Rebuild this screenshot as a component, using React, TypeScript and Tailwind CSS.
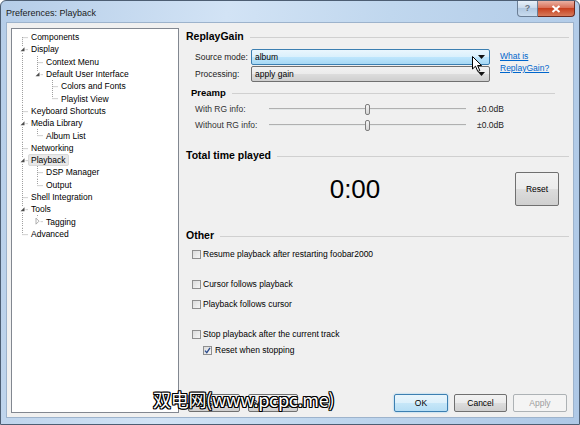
import React from 'react'

type TreeNode = { label: string; level: number; exp?: 'open' | 'closed'; sel?: boolean }

const tree: TreeNode[] = [
  { label: 'Components', level: 0 },
  { label: 'Display', level: 0, exp: 'open' },
  { label: 'Context Menu', level: 1 },
  { label: 'Default User Interface', level: 1, exp: 'open' },
  { label: 'Colors and Fonts', level: 2 },
  { label: 'Playlist View', level: 2 },
  { label: 'Keyboard Shortcuts', level: 0 },
  { label: 'Media Library', level: 0, exp: 'open' },
  { label: 'Album List', level: 1 },
  { label: 'Networking', level: 0 },
  { label: 'Playback', level: 0, exp: 'open', sel: true },
  { label: 'DSP Manager', level: 1 },
  { label: 'Output', level: 1 },
  { label: 'Shell Integration', level: 0 },
  { label: 'Tools', level: 0, exp: 'open' },
  { label: 'Tagging', level: 1, exp: 'closed' },
  { label: 'Advanced', level: 0 },
]

const ROW = 12.3

// does the node (or ancestor) at depth k have a later sibling?
const hasNext = (i: number, k: number) => {
  for (let j = i + 1; j < tree.length; j++) {
    if (tree[j].level <= k) return tree[j].level === k
  }
  return false
}

function TreeRow({ i }: { i: number }) {
  const n = tree[i]
  const w = 16 + 15 * n.level
  const mid = ROW / 2
  const x = 10.5 + 15 * n.level
  const line = { stroke: '#a0a0a0', strokeDasharray: '1 1', strokeWidth: 1 }

  return (
    <div className="flex h-[12.3px] items-center">
      <svg width={w} height={ROW} className="shrink-0">
        {Array.from({ length: n.level }).map((_, k) =>
          hasNext(i, k) ? <line key={k} x1={10.5 + 15 * k} y1={0} x2={10.5 + 15 * k} y2={ROW} {...line} /> : null
        )}
        <line x1={x} y1={i === 0 ? mid : 0} x2={x} y2={hasNext(i, n.level) ? ROW : mid} {...line} />
        <line x1={x} y1={mid + 0.5} x2={x + 7} y2={mid + 0.5} {...line} />
        {n.exp === 'open' && (
          <>
            <rect x={x - 3} y={mid - 3} width={6} height={6} fill="#fff" />
            <polygon points={`${x + 2},${mid - 2} ${x + 2},${mid + 2} ${x - 2},${mid + 2}`} fill="#4d4d4d" />
          </>
        )}
        {n.exp === 'closed' && (
          <>
            <rect x={x - 3} y={mid - 4} width={6} height={8} fill="#fff" />
            <polygon points={`${x - 1.5},${mid - 3} ${x + 1.5},${mid} ${x - 1.5},${mid + 3}`} fill="#fff" stroke="#9a9a9a" strokeWidth={0.8} />
          </>
        )}
      </svg>
      <span
        className={
          n.sel
            ? 'rounded-[2px] border border-[#d9d9d9] bg-[#e8e8e8] px-[2px] leading-[10px] whitespace-nowrap'
            : 'border border-transparent px-[2px] leading-[10px] whitespace-nowrap'
        }
      >
        {n.label}
      </span>
    </div>
  )
}

function Heading({ children, small, lineRight }: { children: React.ReactNode; small?: boolean; lineRight?: boolean }) {
  return (
    <div className="flex h-[14px] items-center">
      <span className={small ? 'text-[9.5px] font-bold' : 'text-[10.5px] font-bold'}>{children}</span>
      <div className={lineRight ? 'ml-[6px] mr-[14px] h-px flex-1 bg-[#d0d0d0]' : 'ml-[6px] h-px flex-1 bg-[#d0d0d0]'} />
    </div>
  )
}

function Arrow() {
  return (
    <svg width="7" height="4" className="shrink-0">
      <polygon points="0,0 7,0 3.5,4" fill="#111" />
    </svg>
  )
}

function Combo({ value, hot }: { value: string; hot?: boolean }) {
  return (
    <div
      className={
        hot
          ? 'flex h-[16px] w-[239px] items-center justify-between rounded-[2px] border border-[#3c7fb1] bg-[linear-gradient(#eaf6fd_0%,#d9f0fc_50%,#bee6fd_50%,#a7d9f5_100%)] pl-[3px] pr-[4px]'
          : 'flex h-[16px] w-[239px] items-center justify-between rounded-[2px] border border-[#707070] bg-[linear-gradient(#f2f2f2_0%,#ebebeb_50%,#dddddd_50%,#cfcfcf_100%)] pl-[3px] pr-[4px]'
      }
    >
      <span>{value}</span>
      <Arrow />
    </div>
  )
}

function Slider({ label }: { label: string }) {
  return (
    <div className="flex h-[16px] items-center pl-[9px]">
      <span className="w-[74px] text-[#333]">{label}</span>
      <div className="flex h-[12px] w-[197px] items-center justify-center">
        <div className="h-[2px] flex-1 border-t border-[#b0b0b0] bg-[#e7eaea]" />
        <div className="h-[11px] w-[5px] rounded-[2px] border border-[#7d7d7d] bg-[linear-gradient(#f4f4f4,#d6d6d6)]" />
        <div className="h-[2px] flex-1 border-t border-[#b0b0b0] bg-[#e7eaea]" />
      </div>
      <span className="ml-[11px] text-[#222]">±0.0dB</span>
    </div>
  )
}

function Check({ label, checked, indent }: { label: string; checked?: boolean; indent?: boolean }) {
  return (
    <div className={indent ? 'flex h-[13px] items-center pl-[17px]' : 'flex h-[13px] items-center pl-[6px]'}>
      <div className="flex h-[9px] w-[9px] items-center justify-center border border-[#8f8f8f] bg-[linear-gradient(135deg,#dcdcdc,#f6f6f6)]">
        {checked && (
          <svg width="7" height="7" viewBox="0 0 7 7">
            <path d="M1 3.6 L2.8 5.6 L6 0.8" fill="none" stroke="#2a4b8d" strokeWidth="1.3" />
          </svg>
        )}
      </div>
      <span className={indent ? 'ml-[3px]' : 'ml-[2px]'}>{label}</span>
    </div>
  )
}

const btn =
  'flex h-[18px] items-center justify-center rounded-[2px] border border-[#707070] bg-[linear-gradient(#f2f2f2_0%,#ebebeb_50%,#dddddd_50%,#cfcfcf_100%)]'

export default function App() {
  return (
    <div className="flex h-[425px] w-[580px] flex-col overflow-hidden rounded-t-[6px] border border-[#4d5e73] bg-[linear-gradient(100deg,#b5cde8_0%,#d2e3f5_35%,#c0d7ee_60%,#aec8e6_100%)] font-['Liberation_Sans',Arial,sans-serif] text-[8.5px] text-black">
      {/* title bar */}
      <div className="flex h-[21px] shrink-0 items-start">
        <span className="mt-[6px] ml-[5px] text-[9px] text-[#1b1b1b]">Preferences: Playback</span>
        <div className="ml-auto mr-[4px] flex">
          <div className="flex h-[16px] w-[21px] items-center justify-center rounded-bl-[4px] border border-t-0 border-[#6b7e95] bg-[linear-gradient(#e8f0f9,#c5d7ea_50%,#b1c8e1_50%,#c9dbee)] text-[9px] font-bold text-[#6a7480]">
            ?
          </div>
          <div className="flex h-[16px] w-[37px] items-center justify-center rounded-br-[4px] border border-l-0 border-t-0 border-[#6d2a1f] bg-[linear-gradient(#eab0a2,#d86a50_50%,#c7401f_50%,#d77a5a)]">
            <svg width="10" height="8" viewBox="0 0 10 8">
              <path d="M1.5 1 L8.5 7 M8.5 1 L1.5 7" stroke="#fff" strokeWidth="2" />
            </svg>
          </div>
        </div>
      </div>

      {/* client area */}
      <div className="relative mx-[5px] mb-[6px] flex flex-1 border border-[#9db3cc] bg-[#f0f0f0]">
        {/* tree */}
        <div className="mt-[5px] mb-[4px] ml-[4px] w-[168px] border border-[#828790] bg-white pt-[2px]">
          {tree.map((_, i) => (
            <TreeRow key={i} i={i} />
          ))}
        </div>

        {/* right page */}
        <div className="ml-[7px] flex flex-1 flex-col pt-[7px] pr-[4px] pb-[4px]">
          <Heading>ReplayGain</Heading>

          <div className="mt-[5px] flex">
            <div className="flex flex-col gap-[1px] pl-[9px]">
              <div className="flex items-center">
                <span className="w-[56px] text-[#222]">Source mode:</span>
                <Combo value="album" hot />
              </div>
              <div className="flex items-center">
                <span className="w-[56px] text-[#222]">Processing:</span>
                <Combo value="apply gain" />
              </div>
            </div>
            <div className="mt-[1px] ml-[10px] leading-[12px] text-[#0066cc] underline">
              What is
              <br />
              ReplayGain?
            </div>
          </div>

          <div className="mt-[4px] pl-[5px]">
            <Heading small lineRight>
              Preamp
            </Heading>
          </div>
          <div className="mt-[1px]">
            <Slider label="With RG info:" />
            <Slider label="Without RG info:" />
          </div>

          <div className="mt-[16px]">
            <Heading>Total time played</Heading>
          </div>
          <div className="mt-[9px] flex h-[34px] items-center">
            <div className="flex-1 pl-[9px] text-center text-[26px] leading-none">0:00</div>
            <div className={btn + ' mr-[10px] h-[34px] w-[44px]'}>Reset</div>
          </div>

          <div className="mt-[23px]">
            <Heading>Other</Heading>
          </div>
          <div className="mt-[5px] flex flex-col">
            <Check label="Resume playback after restarting foobar2000" />
            <div className="mt-[17px]">
              <Check label="Cursor follows playback" />
            </div>
            <div className="mt-[7px]">
              <Check label="Playback follows cursor" />
            </div>
            <div className="mt-[17px]">
              <Check label="Stop playback after the current track" />
            </div>
            <div className="mt-[3px]">
              <Check label="Reset when stopping" checked indent />
            </div>
          </div>

          {/* dialog buttons */}
          <div className="mt-auto mb-[1px] flex">
            <div className={btn + ' ml-[2px] w-[52px]'}>Reset all</div>
            <div className={btn + ' ml-[8px] w-[50px]'}>Reset page</div>
            <div className="ml-auto flex h-[18px] w-[54px] items-center justify-center rounded-[2px] border border-[#3c7fb1] bg-[linear-gradient(#e9f5fc_0%,#dcf0fb_50%,#c7e7f8_50%,#b6def5_100%)] shadow-[0_0_2px_#7fc4ee]">
              OK
            </div>
            <div className={btn + ' ml-[6px] w-[53px]'}>Cancel</div>
            <div className="mr-[2px] ml-[6px] flex h-[18px] w-[54px] items-center justify-center rounded-[2px] border border-[#adb2b5] bg-[#f4f4f4] text-[#9c9c9c]">
              Apply
            </div>
          </div>
        </div>

        {/* mouse pointer over the combo */}
        <svg className="absolute left-[465px] top-[33px]" width="11" height="17" viewBox="0 0 11 17">
          <path d="M0.5 0.5 L0.5 13 L3.5 10.2 L5.8 15.5 L7.8 14.6 L5.6 9.5 L9.6 9.5 Z" fill="#fff" stroke="#000" strokeWidth="1" strokeLinejoin="round" />
        </svg>

        {/* site watermark */}
        <div className="absolute left-[146px] top-[367px] font-['Noto_Sans_CJK_SC','Liberation_Sans',sans-serif] text-[18px] leading-none tracking-[-0.3px] text-white [text-shadow:1px_0_0_#000,-1px_0_0_#000,0_1px_0_#000,0_-1px_0_#000,1px_1px_0_#000,-1px_-1px_0_#000,1px_-1px_0_#000,-1px_1px_0_#000]">
          双电网(www.pcpc.me)
        </div>
      </div>
    </div>
  )
}
